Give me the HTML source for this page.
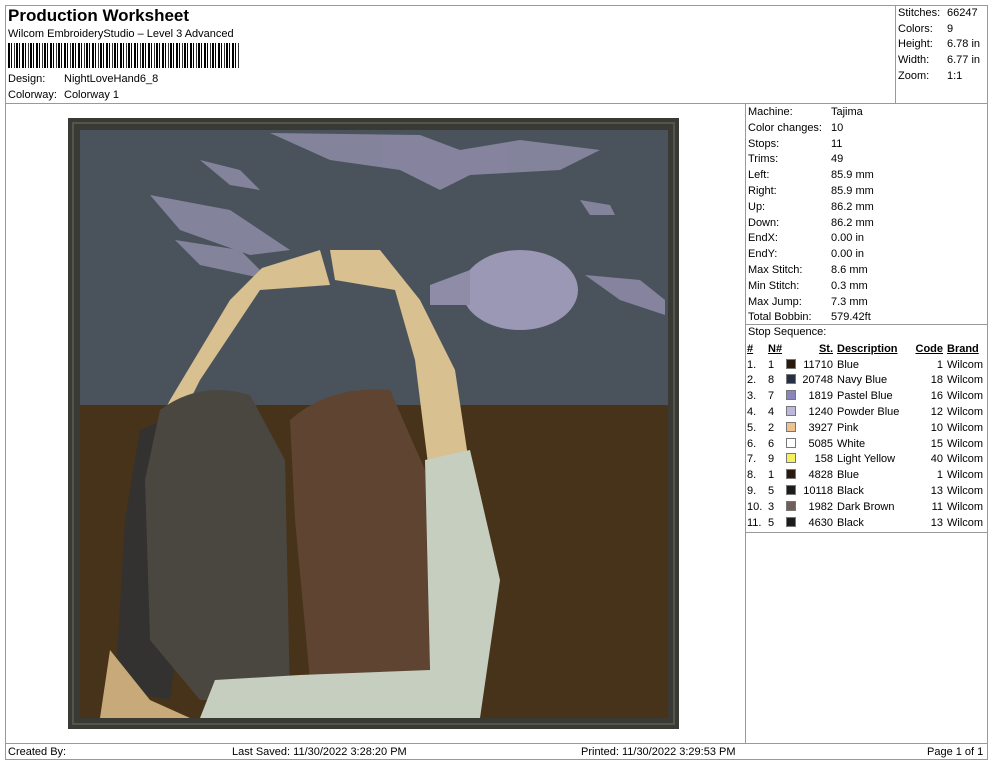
<!DOCTYPE html>
<html><head><meta charset="utf-8"><style>
*{margin:0;padding:0;box-sizing:border-box}
body{width:990px;height:762px;background:#fff;font-family:"Liberation Sans",Arial,sans-serif;font-size:11px;color:#000;position:relative;overflow:hidden}
.a{position:absolute;white-space:nowrap}
.ln{position:absolute;background:#999}
table{position:absolute;left:747px;top:341px;border-collapse:collapse;font-size:11px}
td{height:15.8px;padding:0;white-space:nowrap}
.sw{display:inline-block;width:10px;height:10px;border:1px solid #777;vertical-align:-1px}
</style></head><body>
<div class="ln" style="left:5px;top:5px;width:983px;height:1px"></div>
<div class="ln" style="left:5px;top:5px;width:1px;height:755px"></div>
<div class="ln" style="left:987px;top:5px;width:1px;height:755px"></div>
<div class="ln" style="left:5px;top:103px;width:983px;height:1px"></div>
<div class="ln" style="left:895px;top:5px;width:1px;height:99px"></div>
<div class="ln" style="left:745px;top:104px;width:1px;height:639px"></div>
<div class="ln" style="left:745px;top:324px;width:243px;height:1px"></div>
<div class="ln" style="left:745px;top:532px;width:243px;height:1px"></div>
<div class="ln" style="left:5px;top:743px;width:983px;height:1px"></div>
<div class="ln" style="left:5px;top:759px;width:983px;height:1px"></div>

<div class="a" style="left:8px;top:6px;font-size:17px;font-weight:bold">Production Worksheet</div>
<div class="a" style="left:8px;top:28px">Wilcom EmbroideryStudio – Level 3 Advanced</div>
<div class="a" style="left:8px;top:43px;width:232px;height:25px;background:repeating-linear-gradient(90deg,#000 0 2px,#fff 2px 3px,#000 3px 4px,#fff 4px 6px,#333 6px 7px,#fff 7px 8px,#000 8px 10px,#fff 10px 11px,#000 11px 12px,#fff 12px 14px)"></div>
<div class="a" style="left:8px;top:73px">Design:</div><div class="a" style="left:64px;top:73px">NightLoveHand6_8</div>
<div class="a" style="left:8px;top:89px">Colorway:</div><div class="a" style="left:64px;top:89px">Colorway 1</div>

<div class="a" style="left:898px;top:6px;line-height:15.7px">Stitches:<br>Colors:<br>Height:<br>Width:<br>Zoom:</div>
<div class="a" style="left:947px;top:6px;line-height:15.7px">66247<br>9<br>6.78 in<br>6.77 in<br>1:1</div>

<div class="a" style="left:748px;top:105px;line-height:15.8px">Machine:<br>Color changes:<br>Stops:<br>Trims:<br>Left:<br>Right:<br>Up:<br>Down:<br>EndX:<br>EndY:<br>Max Stitch:<br>Min Stitch:<br>Max Jump:<br>Total Bobbin:</div>
<div class="a" style="left:831px;top:105px;line-height:15.8px">Tajima<br>10<br>11<br>49<br>85.9 mm<br>85.9 mm<br>86.2 mm<br>86.2 mm<br>0.00 in<br>0.00 in<br>8.6 mm<br>0.3 mm<br>7.3 mm<br>579.42ft</div>
<div class="a" style="left:748px;top:326px">Stop Sequence:</div>
<table>
<tr style="font-weight:bold;text-decoration:underline"><td style="width:21px">#</td><td style="width:18px">N#</td><td style="width:14px"></td><td style="width:33px;text-align:right">St.</td><td style="width:4px"></td><td style="width:72px">Description</td><td style="width:34px;text-align:right">Code</td><td style="width:4px"></td><td>Brand</td></tr>
<tr><td>1.</td><td>1</td><td><span class="sw" style="background:#2a1a0e"></span></td><td align="right">11710</td><td></td><td>Blue</td><td align="right">1</td><td></td><td>Wilcom</td></tr>
<tr><td>2.</td><td>8</td><td><span class="sw" style="background:#263045"></span></td><td align="right">20748</td><td></td><td>Navy Blue</td><td align="right">18</td><td></td><td>Wilcom</td></tr>
<tr><td>3.</td><td>7</td><td><span class="sw" style="background:#8a86bd"></span></td><td align="right">1819</td><td></td><td>Pastel Blue</td><td align="right">16</td><td></td><td>Wilcom</td></tr>
<tr><td>4.</td><td>4</td><td><span class="sw" style="background:#bcb8dc"></span></td><td align="right">1240</td><td></td><td>Powder Blue</td><td align="right">12</td><td></td><td>Wilcom</td></tr>
<tr><td>5.</td><td>2</td><td><span class="sw" style="background:#f0c08e"></span></td><td align="right">3927</td><td></td><td>Pink</td><td align="right">10</td><td></td><td>Wilcom</td></tr>
<tr><td>6.</td><td>6</td><td><span class="sw" style="background:#fff"></span></td><td align="right">5085</td><td></td><td>White</td><td align="right">15</td><td></td><td>Wilcom</td></tr>
<tr><td>7.</td><td>9</td><td><span class="sw" style="background:#f4f060"></span></td><td align="right">158</td><td></td><td>Light Yellow</td><td align="right">40</td><td></td><td>Wilcom</td></tr>
<tr><td>8.</td><td>1</td><td><span class="sw" style="background:#2a1a0e"></span></td><td align="right">4828</td><td></td><td>Blue</td><td align="right">1</td><td></td><td>Wilcom</td></tr>
<tr><td>9.</td><td>5</td><td><span class="sw" style="background:#1c1c1c"></span></td><td align="right">10118</td><td></td><td>Black</td><td align="right">13</td><td></td><td>Wilcom</td></tr>
<tr><td>10.</td><td>3</td><td><span class="sw" style="background:#6e6058"></span></td><td align="right">1982</td><td></td><td>Dark Brown</td><td align="right">11</td><td></td><td>Wilcom</td></tr>
<tr><td>11.</td><td>5</td><td><span class="sw" style="background:#1c1c1c"></span></td><td align="right">4630</td><td></td><td>Black</td><td align="right">13</td><td></td><td>Wilcom</td></tr>
</table>

<svg class="a" style="left:0;top:0" width="745" height="743" viewBox="0 0 745 743">
<rect x="68" y="118" width="611" height="611" fill="#3a3a34"/>
<rect x="73" y="123" width="601" height="601" fill="none" stroke="#55554d" stroke-width="2"/>
<rect x="80" y="130" width="588" height="588" fill="#4a535c"/>
<rect x="80" y="405" width="588" height="313" fill="#47321a"/>
<g fill="#8f8ca8" opacity=".85">
<path d="M200 160 L240 170 L260 190 L230 185 Z"/>
<path d="M270 133 L420 135 L460 150 L520 140 L600 150 L560 170 L470 175 L440 190 L400 170 L330 160 Z"/>
<path d="M150 195 L230 210 L260 230 L290 250 L250 255 L180 230 Z"/>
<path d="M175 240 L240 250 L270 280 L200 265 Z"/>
<path d="M580 200 L610 205 L615 215 L590 215 Z"/>
<path d="M585 275 L640 280 L665 300 L665 315 L620 300 Z"/>
</g>
<ellipse cx="520" cy="290" rx="58" ry="40" fill="#9a98b4"/>
<path d="M430 285 L470 270 L470 305 L430 305 Z" fill="#8f8ca8"/>
<g fill="#d8c090">
<path d="M262 268 L320 250 L330 285 L260 290 L200 380 L175 430 L150 440 L170 400 L230 300 Z"/>
<path d="M330 250 L380 250 L420 300 L455 370 L470 470 L430 480 L415 360 L395 290 L335 280 Z"/>
</g>
<path d="M140 430 L175 415 L230 420 L200 480 L170 700 L115 690 L125 520 Z" fill="#333230"/>
<path d="M160 410 Q200 380 250 395 L285 460 L290 700 L200 700 L150 640 L145 480 Z" fill="#4a4740"/>
<path d="M290 420 Q330 385 390 390 L425 470 L430 680 L310 680 L295 520 Z" fill="#5e4431"/>
<path d="M425 460 L470 450 L500 580 L480 718 L200 718 L215 680 L300 675 L430 670 Z" fill="#c6cec0"/>
<path d="M110 650 L150 700 L190 718 L100 718 Z" fill="#c8aa7a"/>
</svg>

<div class="a" style="left:8px;top:746px">Created By:</div>
<div class="a" style="left:232px;top:746px">Last Saved: 11/30/2022 3:28:20 PM</div>
<div class="a" style="left:581px;top:746px">Printed: 11/30/2022 3:29:53 PM</div>
<div class="a" style="left:927px;top:746px">Page 1 of 1</div>
</body></html>
